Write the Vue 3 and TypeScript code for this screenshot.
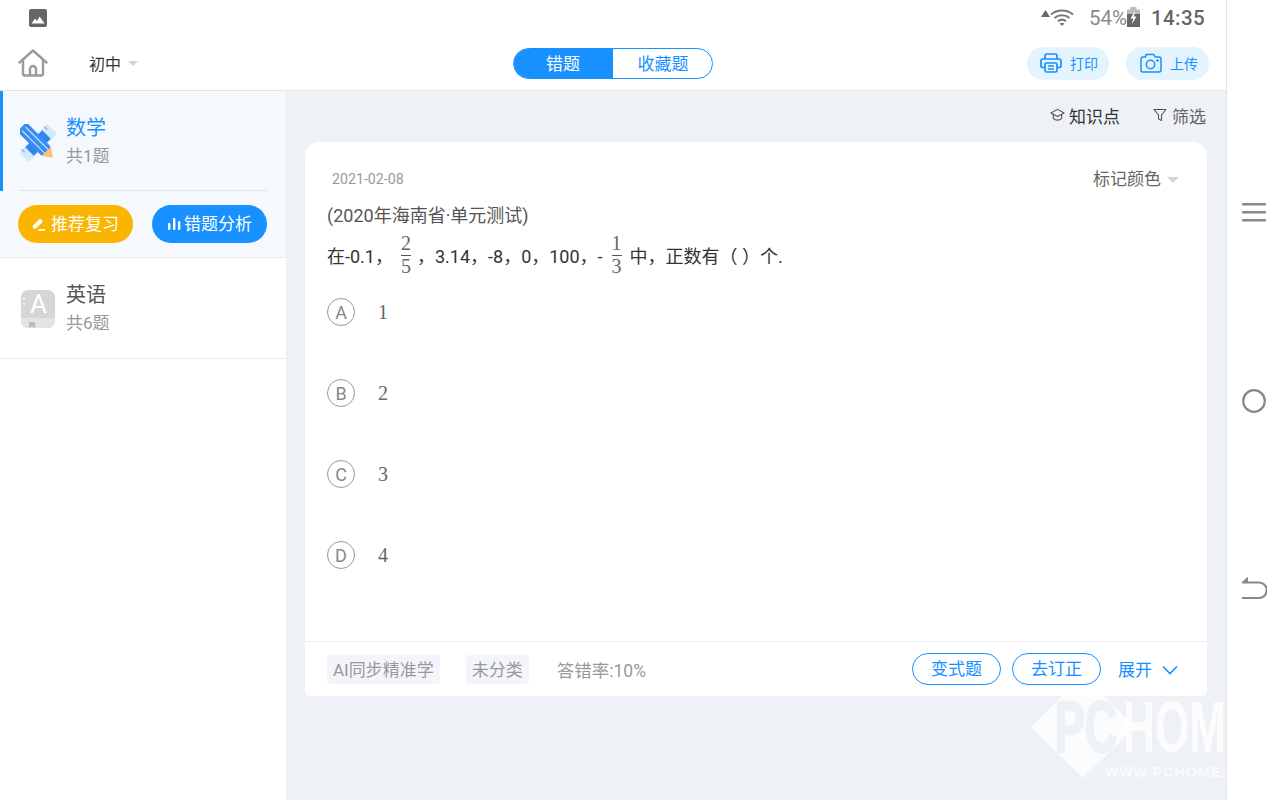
<template>
  <div class="device">
    <div class="screen">
      <div class="status-bar">
        <svg class="pic-icon" viewBox="0 0 18 18" width="18" height="18">
          <rect width="18" height="18" rx="2" fill="#666" />
          <path d="M2.5 14.5 6 9.5l2 2.5 2.6-4.5 4.9 7z" fill="#fff" />
        </svg>
        <div class="status-right">
          <svg viewBox="0 0 9 7" width="9" height="7" class="signal"><path d="M4.5 0 9 7H0z" fill="#666" /></svg>
          <svg viewBox="0 0 24 18" width="24" height="18" class="wifi" fill="none" stroke="#777" stroke-width="2">
            <path d="M1 6.5C7 1.2 17 1.2 23 6.5" />
            <path d="M4.5 10c4.2-3.6 10.8-3.6 15 0" />
            <path d="M8 13.2c2.4-1.9 5.6-1.9 8 0" />
            <path d="M12 18l-2.4-2.6c1.4-.9 3.4-.9 4.8 0z" fill="#777" stroke="none" />
          </svg>
          <span class="battery-text">54%</span>
          <svg viewBox="0 0 13 20" width="13" height="20" class="battery">
            <rect x="3.5" y="0" width="6" height="3" fill="#bbb" />
            <rect x="0" y="2.5" width="13" height="5" fill="#bbb" />
            <rect x="0" y="7" width="13" height="13" fill="#666" />
            <path d="M8 4 3.5 11.5h2.6L5 17l4.5-7.5H6.9z" fill="#fff" />
          </svg>
          <span class="clock">14:35</span>
        </div>
      </div>

      <header class="top-bar">
        <div class="top-left">
          <svg class="home" viewBox="0 0 30 28" width="30" height="28" fill="none" stroke="#9b9b9b" stroke-width="2.4" stroke-linejoin="round" stroke-linecap="round">
            <path d="M1.5 13.5 15 1.5l13.5 12" />
            <path d="M5 11v13.5a2 2 0 0 0 2 2h16a2 2 0 0 0 2-2V11" />
            <path d="M12 26v-6a3 3 0 0 1 6 0v6" />
          </svg>
          <span class="grade">初中</span>
          <i class="caret"></i>
        </div>
        <div class="segment">
          <span class="seg on">错题</span>
          <span class="seg">收藏题</span>
        </div>
        <div class="top-actions">
          <button class="pill-light print">
            <svg viewBox="0 0 22 20" width="22" height="20" fill="none" stroke="#1890ff" stroke-width="1.7" stroke-linejoin="round">
              <path d="M5 6V2.5A1.5 1.5 0 0 1 6.5 1h9A1.5 1.5 0 0 1 17 2.5V6" />
              <path d="M5 14.5H3a2 2 0 0 1-2-2V8a2 2 0 0 1 2-2h16a2 2 0 0 1 2 2v4.500a2 2 0 0 1-2 2h-2" />
              <rect x="5" y="10" width="12" height="9" rx="1.500" />
              <path d="M8 13h6M8 16h6" />
            </svg>
            打印
          </button>
          <button class="pill-light upload">
            <svg viewBox="0 0 22 20" width="22" height="20" fill="none" stroke="#1890ff" stroke-width="1.500" stroke-linejoin="round">
              <path d="M3 4h2.500L6 1.500h8L15 4h4a2 2 0 0 1 2 2v11a2 2 0 0 1-2 2H3a2 2 0 0 1-2-2V6a2 2 0 0 1 2-2z" />
              <circle cx="10.500" cy="11.500" r="4.200" />
              <circle cx="17.500" cy="7.500" r=".6" fill="#1890ff" />
            </svg>
            上传
          </button>
        </div>
      </header>

      <div class="body">
        <aside class="sidebar">
          <section class="subject-block active">
            <div class="subject-row first">
              <svg class="subject-icon" viewBox="0 0 36 38" width="36" height="38">
                <g transform="rotate(45 18 19)">
                  <rect x="11" y="-1" width="14" height="40" rx="2" fill="#d3e9ff" />
                  <rect x="12" y="7" width="12" height="24" fill="#2f87ee" />
                  <path d="M11 3h4M11 35h4" stroke="#5aa9f5" stroke-width="1" />
                </g>
                <g transform="rotate(-45 18 19)">
                  <rect x="11.500" y="-4" width="13" height="35" rx="2" fill="#3a8df0" />
                  <path d="M15.500 -1v32M20.500 -1v32" stroke="#dcecff" stroke-width="1" />
                  <path d="M11.500 31h13L18 40z" fill="#fbc277" />
                </g>
              </svg>
              <div class="subject-text">
                <div class="subject-name blue">数学</div>
                <div class="subject-count">共1题</div>
              </div>
            </div>
            <div class="action-row">
              <button class="pill-solid orange">
                <svg viewBox="0 0 14 14" width="14" height="14" fill="#fff">
                  <path d="M1 8.500 8 1.500l3 3L4 11.500H1zM7 12h6v1.800H6z" />
                </svg>
                <span>推荐复习</span>
              </button>
              <button class="pill-solid blue-bg">
                <svg viewBox="0 0 14 14" width="14" height="14" fill="#fff">
                  <rect x="1" y="6" width="2.400" height="7" rx="1" />
                  <rect x="6" y="1" width="2.400" height="12" rx="1" />
                  <rect x="11" y="4" width="2.400" height="9" rx="1" />
                </svg>
                <span>错题分析</span>
              </button>
            </div>
          </section>
          <section class="subject-block">
            <div class="subject-row">
              <svg class="subject-icon book" viewBox="0 0 36 38" width="36" height="38">
                <rect x="1" y="0" width="34" height="38" rx="7" fill="#d6d6d6" />
                <path d="M1 28h34v3a7 7 0 0 1-7 7H8a7 7 0 0 1-7-7z" fill="#e4e4e4" />
                <path d="M9 32h6v6l-3-1.500L9 38z" fill="#bcbcbc" />
                <path d="M4 8v2M4 13v2" stroke="#fff" stroke-width="1.200" />
                <text x="18.500" y="23" text-anchor="middle" class="book-letter">A</text>
              </svg>
              <div class="subject-text">
                <div class="subject-name">英语</div>
                <div class="subject-count">共6题</div>
              </div>
            </div>
          </section>
        </aside>

        <main class="main">
          <div class="toolbar">
            <span class="tool dark">
              <svg viewBox="0 0 16 14" width="15" height="14" fill="none" stroke="#555" stroke-width="1.200" stroke-linejoin="round">
                <path d="M8 1 15 4.800 8 8.500 1 4.800z" />
                <path d="M3.500 6.500v4c2.500 2.600 6.500 2.600 9 0v-4" />
              </svg>
              知识点
            </span>
            <span class="tool">
              <svg viewBox="0 0 14 14" width="14" height="14" fill="none" stroke="#555" stroke-width="1.100" stroke-linejoin="round">
                <path d="M1 1.500h12L8.500 7v5.500l-3-1.500V7z" />
              </svg>
              筛选
            </span>
          </div>

          <article class="card">
            <div class="card-body">
              <div class="card-head">
                <span class="date">2021-02-08</span>
                <span class="mark">标记颜色<i class="caret big"></i></span>
              </div>
              <div class="source">(2020年海南省·单元测试)</div>
              <div class="question">
                <span>在-0.1，</span>
                <span class="frac first-frac"><b>2</b><b>5</b></span>
                <span class="q-mid">，3.14，-8，0，100，-</span>
                <span class="frac second-frac"><b>1</b><b>3</b></span>
                <span class="q-end">中，正数有（&nbsp;）个.</span>
              </div>
              <ul class="options">
                <li v-for="o in options" :key="o.key" class="option">
                  <span class="letter">{{ o.key }}</span>
                  <span class="value">{{ o.value }}</span>
                </li>
              </ul>
            </div>
            <footer class="card-foot">
              <span class="tag">AI同步精准学</span>
              <span class="tag tag-two">未分类</span>
              <span class="rate">答错率:10%</span>
              <div class="foot-actions">
                <button class="pill-line">变式题</button>
                <button class="pill-line">去订正</button>
                <span class="expand">展开
                  <svg viewBox="0 0 16 10" width="16" height="10" fill="none" stroke="#1890ff" stroke-width="1.600">
                    <path d="M1 1.500 8 8.500l7-7" />
                  </svg>
                </span>
              </div>
            </footer>
          </article>

          <svg class="watermark" viewBox="0 0 195 110" width="195" height="110">
            <path d="M0 37 52 -15 104 37 52 88z" fill="#fff" fill-opacity=".75" />
            <text x="24" y="62" class="wm-big" fill="#eef1f6" stroke="#eef1f6" stroke-width="2.500" textLength="62" lengthAdjust="spacingAndGlyphs">PC</text>
            <text x="92" y="62" class="wm-big" fill="#fff" fill-opacity=".8" textLength="103" lengthAdjust="spacingAndGlyphs">HOM</text>
            <path d="M137 30v16l4-4 3 6 3-1.500-3-6h5z" fill="#eef1f6" />
            <text x="74" y="87" class="wm-small" fill="#fff" fill-opacity=".8">WWW.PCHOME.</text>
          </svg>
        </main>
      </div>
    </div>

    <nav class="soft-keys">
      <svg viewBox="0 0 24 20" width="24" height="20" fill="#888">
        <rect y="0" width="24" height="2.500" rx="1" />
        <rect y="8" width="24" height="2.500" rx="1" />
        <rect y="16" width="24" height="2.500" rx="1" />
      </svg>
      <svg viewBox="0 0 24 24" width="24" height="24" fill="none" stroke="#888" stroke-width="2.200">
        <circle cx="12" cy="12" r="10.800" />
      </svg>
      <svg viewBox="0 0 26 24" width="26" height="24" fill="none" stroke="#888" stroke-width="2.200">
        <path d="M1 6.500h17a6.700 6.700 0 0 1 0 15.500H1" />
        <path d="M1 6.500 6.500 1.500v5z" fill="#888" stroke-width="1" />
      </svg>
    </nav>
  </div>
</template>

<script setup lang="ts">
interface Option {
  key: string
  value: string
}

const options: Option[] = [
  { key: 'A', value: '1' },
  { key: 'B', value: '2' },
  { key: 'C', value: '3' },
  { key: 'D', value: '4' }
]
</script>

<style>
html,
body {
  margin: 0;
  background: #fff;
}
</style>

<style scoped>
.device {
  width: 1280px;
  height: 800px;
  display: flex;
  overflow: hidden;
  font-family: "Roboto", "Noto Sans CJK SC", sans-serif;
  color: #333;
}

.screen {
  width: 1226px;
  display: flex;
  flex-direction: column;
}

.soft-keys {
  width: 53px;
  border-left: 1px solid #e2e2e2;
  display: flex;
  flex-direction: column;
  align-items: center;
  padding-top: 203px;
  gap: 166px;
}

.soft-keys svg:nth-child(3) {
  margin-top: -3px;
}

.status-bar {
  height: 36px;
  display: flex;
  justify-content: space-between;
  align-items: center;
  padding: 0 21px 0 29px;
}

.status-right {
  display: flex;
  align-items: center;
}

.signal {
  margin: -9px 0 0 0;
}

.wifi {
  margin-top: -3px;
}

.battery-text {
  font-size: 20.500px;
  color: #8a8a8a;
  margin-left: 15px;
  width: 38px;
}

.battery {
  margin-top: -3px;
}

.clock {
  font-size: 20.500px;
  font-weight: 500;
  color: #666;
  margin-left: 11px;
  letter-spacing: .4px;
}

.top-bar {
  height: 54px;
  border-bottom: 1px solid #e4e6ea;
  display: grid;
  grid-template-columns: 1fr auto 1fr;
  align-items: center;
  padding: 0 17px;
}

.top-left {
  display: flex;
  align-items: center;
  padding-left: 1px;
}

.home {
  margin-top: -1px;
}

.grade {
  font-size: 16px;
  margin-left: 41px;
}

.caret {
  display: inline-block;
  width: 0;
  height: 0;
  border: 5px solid transparent;
  border-top: 5px solid #d4d4d4;
  border-bottom: 0;
  margin-left: 7px;
}

.caret.big {
  border-width: 6px;
  border-bottom: 0;
  margin-left: 6px;
  vertical-align: 2px;
}

.segment {
  width: 200px;
  height: 31px;
  box-sizing: border-box;
  border: 1px solid #1890ff;
  border-radius: 16px;
  overflow: hidden;
  display: flex;
}

.seg {
  flex: 1;
  text-align: center;
  line-height: 30px;
  font-size: 17px;
  color: #1890ff;
  padding-left: 1px;
}

.seg.on {
  background: #1890ff;
  color: #fff;
  padding: 0 1px 0 0;
}

.top-actions {
  justify-self: end;
  display: flex;
  gap: 17px;
}

.pill-light {
  height: 33px;
  border: 0;
  border-radius: 17px;
  background: #e3f4ff;
  color: #1890ff;
  font: 14px "Roboto", "Noto Sans CJK SC", sans-serif;
  display: flex;
  align-items: center;
  padding: 0 0 1px;
}

.pill-light.print {
  width: 82px;
  padding-left: 13px;
  gap: 8px;
}

.pill-light.upload {
  width: 83px;
  padding-left: 14px;
  gap: 8px;
}

.body {
  flex: 1;
  display: flex;
  min-height: 0;
}

.sidebar {
  width: 286px;
  background: #fff;
  flex-shrink: 0;
}

.subject-block {
  height: 100px;
  border-bottom: 1px solid #ebebeb;
}

.subject-block.active {
  height: 166px;
  background: #f5f9fd;
  position: relative;
}

.subject-row {
  height: 100px;
  box-sizing: border-box;
  display: flex;
  align-items: center;
  padding-left: 20px;
}

.subject-row.first {
  border-left: 3px solid #1890ff;
  padding-left: 17px;
}

.subject-row.first::after {
  content: "";
  position: absolute;
  left: 19px;
  width: 248px;
  top: 99px;
  height: 1px;
  background: #e4e4e4;
}

.subject-icon {
  flex-shrink: 0;
  margin-top: 3px;
}

.subject-icon.book {
  margin-top: 1px;
}

.subject-text {
  margin-left: 10px;
}

.subject-name {
  font-size: 20px;
  line-height: 26px;
  padding-top: 1px;
  color: #555;
}

.subject-name.blue {
  color: #1890ff;
}

.subject-count {
  font-size: 17px;
  line-height: 24px;
  margin-top: 3px;
  color: #999;
}

.book-letter {
  font: 26px "Roboto", sans-serif;
  fill: #fff;
}

.action-row {
  display: flex;
  justify-content: space-between;
  padding: 14px 19px 0 18px;
}

.pill-solid {
  width: 115px;
  height: 38px;
  border: 0;
  border-radius: 19px;
  color: #fff;
  font: 17px "Noto Sans CJK SC", sans-serif;
  display: flex;
  align-items: center;
  justify-content: center;
  gap: 5px;
  padding: 0;
}

.pill-solid span {
  margin-top: -4px;
}

.pill-solid.blue-bg svg {
  margin-right: -2px;
}

.pill-solid.orange {
  background: #f9b500;
}

.pill-solid.blue-bg {
  background: #1890ff;
}

.main {
  flex: 1;
  position: relative;
  background: #eef1f6;
  border-left: 1px solid #eceef2;
  overflow: hidden;
  padding: 0 19px 0 18px;
}

.toolbar {
  height: 51px;
  display: flex;
  justify-content: flex-end;
  align-items: center;
  gap: 33px;
  padding: 0 1px 3px 0;
  box-sizing: border-box;
}

.tool {
  font-size: 17px;
  color: #666;
  display: flex;
  align-items: center;
  gap: 5px;
}

.tool.dark {
  color: #333;
  gap: 4px;
}

.card {
  height: 554px;
  background: #fff;
  border-radius: 14px 14px 5px 5px;
  display: flex;
  flex-direction: column;
  position: relative;
  z-index: 1;
}

.card-body {
  flex: 1;
  padding: 0 28px 0 22px;
}

.card-head {
  height: 58px;
  display: flex;
  justify-content: space-between;
  align-items: center;
  padding: 34px 0 18px 5px;
  box-sizing: border-box;
  font-size: 14px;
}

.date {
  color: #999;
  font-size: 14.200px;
}

.mark {
  font-size: 17px;
  color: #666;
  margin-top: -3px;
}

.source {
  font-size: 18px;
  line-height: 26px;
  color: #555;
  margin-top: 3px;
}

.question {
  display: flex;
  align-items: center;
  font-size: 18px;
  height: 52px;
  color: #333;
}

.frac {
  display: inline-flex;
  flex-direction: column;
  align-items: center;
  font-family: "Liberation Serif", serif;
  color: #666;
}

.frac b {
  font-weight: 400;
  font-size: 20px;
  line-height: 21px;
  padding: 0 0 1px;
}

.frac b:first-child {
  border-bottom: 1px solid #555;
}

.first-frac {
  margin-left: 7px;
  width: 12px;
}

.second-frac {
  width: 12px;
  margin-left: 8px;
}

.q-mid {
  margin-left: 5px;
}

.q-end {
  margin-left: 7px;
}

.options {
  list-style: none;
  margin: 17px 0 0;
  padding: 0;
}

.option {
  display: flex;
  align-items: center;
  height: 28px;
  margin-bottom: 53px;
}

.letter {
  width: 28px;
  height: 28px;
  box-sizing: border-box;
  border: 1px solid #999;
  border-radius: 50%;
  text-align: center;
  line-height: 28px;
  font-size: 18px;
  color: #888;
}

.value {
  margin-left: 23px;
  font: 20px "Liberation Serif", serif;
  color: #666;
}

.card-foot {
  height: 55px;
  box-sizing: border-box;
  border-top: 1px solid #eceef2;
  display: flex;
  align-items: center;
  padding: 0 29px 0 22px;
  font-size: 17px;
  color: #999;
}

.tag {
  height: 29px;
  line-height: 31px;
  padding: 0 6px;
  background: #f3f5fa;
  border-radius: 4px;
  white-space: nowrap;
}

.tag-two {
  margin-left: 26px;
}

.rate {
  margin-left: 28px;
  font-size: 17.500px;
}

.foot-actions {
  margin-left: auto;
  display: flex;
  align-items: center;
  gap: 11px;
}

.pill-line {
  width: 89px;
  height: 32px;
  border: 1px solid #1890ff;
  border-radius: 16px;
  background: #fff;
  color: #1890ff;
  font: 17px "Noto Sans CJK SC", sans-serif;
  padding: 0 0 3px;
}

.expand {
  display: flex;
  align-items: center;
  gap: 10px;
  margin-left: 6px;
  color: #1890ff;
  font-size: 17px;
  line-height: 24px;
  margin-top: 2px;
}

.watermark {
  position: absolute;
  left: 744px;
  top: 599px;
  z-index: 0;
  pointer-events: none;
}

.wm-big {
  font: bold 72px "Liberation Sans", sans-serif;
}

.wm-small {
  font: bold 14px "Liberation Sans", sans-serif;
  letter-spacing: 1.200px;
}
</style>
